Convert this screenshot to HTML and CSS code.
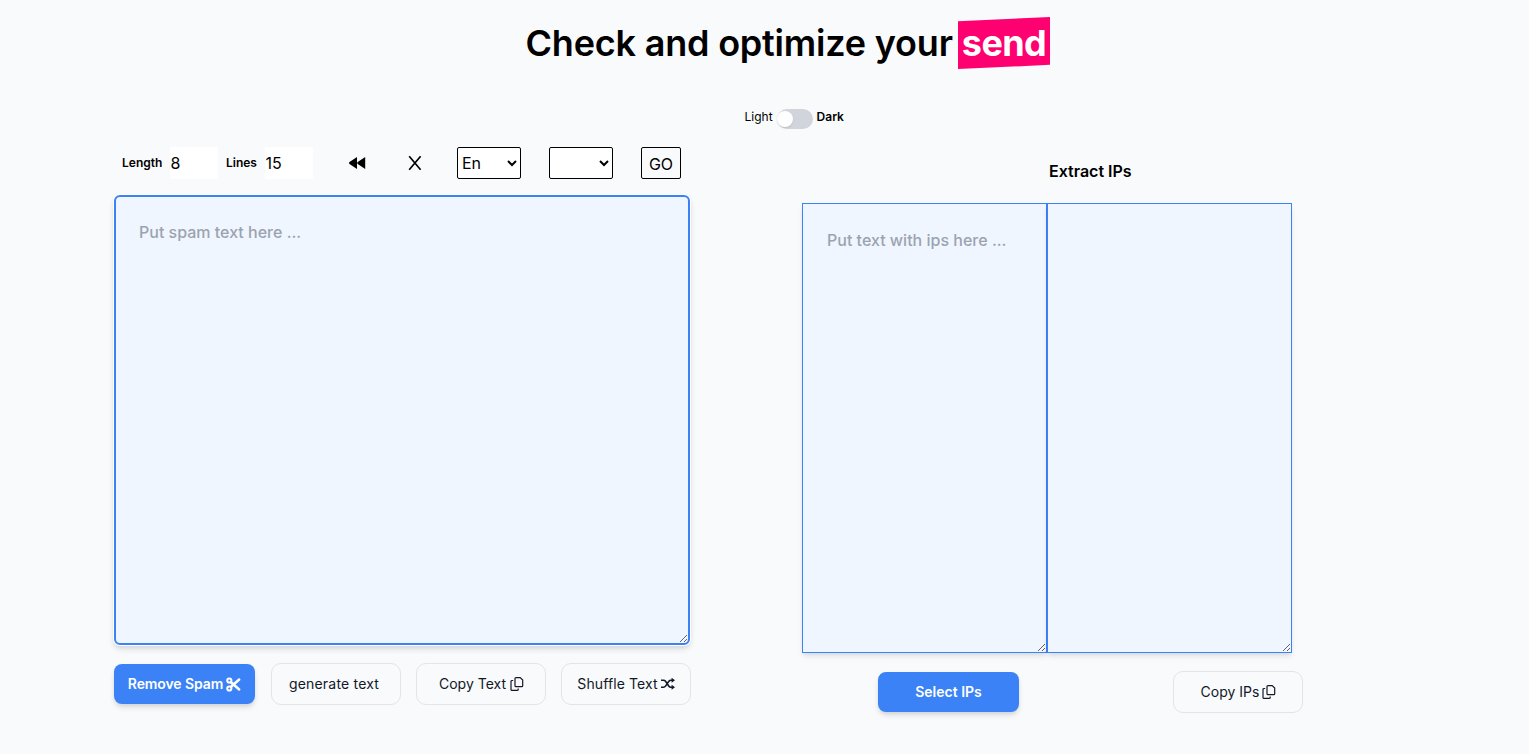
FILE: index.html
```html
<!DOCTYPE html>
<html lang="en">
<head>
<meta charset="utf-8">
<title>Check and optimize your send</title>
<link rel="stylesheet" href="styles.css">
</head>
<body>
<svg width="0" height="0" class="sprite">
  <symbol id="copy" viewBox="0 0 14 14"><path d="M6 .6h4.200l2.500 2.500v5.600a1 1 0 0 1-1 1H6a1 1 0 0 1-1-1V1.600a1 1 0 0 1 1-1zM3.200 3.500H2a1 1 0 0 0-1 1v7.900a1 1 0 0 0 1 1h5.200a1 1 0 0 0 1-1v-.8" fill="none" stroke="currentColor" stroke-width="1.200"/></symbol>
</svg>
<header class="header">
  <h1 class="title"><span class="lead">Check and optimize your</span><span class="mark">send</span></h1>
  <div class="theme"><span class="light">Light</span><span class="switch"><span class="knob"></span></span><span class="dark">Dark</span></div>
</header>
<main class="main">
  <section class="spam">
    <div class="toolbar">
      <label class="label" for="len">Length</label><input class="num" id="len" value="8">
      <label class="label lines" for="lines">Lines</label><input class="num" id="lines" value="15">
      <svg class="rewind" viewBox="0 0 18 14"><path d="M9 1v12L1.500 8Q.3 7 1.500 6zM17.200 1v12L9.700 8Q8.500 7 9.700 6z"/></svg>
      <svg class="close" viewBox="0 0 14 16"><path d="M1.200 1.200l11.400 13.600M12.600 1.200L1.200 14.800"/></svg>
      <select class="select"><option>En</option></select>
      <select class="select second"><option></option></select>
      <button class="go">GO</button>
    </div>
    <textarea class="area spam-area" placeholder="Put spam text here ..."></textarea>
    <div class="actions">
      <button class="btn primary">Remove Spam <svg class="cut" viewBox="0 0 15 15"><g fill="none" stroke="currentColor"><circle cx="3.300" cy="3.500" r="2.100" stroke-width="2"/><circle cx="3.300" cy="11.500" r="2.100" stroke-width="2"/><path d="M5 5.200l8.200 7.300M5 9.800l8.200-7.300" stroke-width="2.500" stroke-linecap="round"/></g></svg></button>
      <button class="btn generate">generate text</button>
      <button class="btn with-copy">Copy Text <svg class="icon"><use href="#copy"/></svg></button>
      <button class="btn shuffle">Shuffle Text <svg class="icon" viewBox="0 0 14 14"><path d="M0 3.200h2.500c1 0 1.500.4 2 1.100l3.400 4.900c.5.700 1 1 2 1h1.500M0 10.200h2.500c1 0 1.500-.4 2-1.100l3.400-4.800c.5-.7 1-1.100 2-1.100h1.500" fill="none" stroke="currentColor" stroke-width="1.600"/><path d="M10.600.7L14 3.200l-3.400 2.600zM10.600 7.700l3.400 2.500-3.400 2.600z" fill="currentColor"/></svg></button>
    </div>
  </section>
  <section class="ips">
    <h2 class="subtitle">Extract IPs</h2>
    <div class="pair"><textarea class="area ip-area" placeholder="Put text with ips here ..."></textarea><textarea class="area ip-area"></textarea></div>
    <div class="actions ip-actions">
      <button class="btn primary select-ips">Select IPs</button>
      <button class="btn copy-ips">Copy IPs <svg class="icon"><use href="#copy"/></svg></button>
    </div>
  </section>
</main>
</body>
</html>
```
FILE: styles.css
```css
* { box-sizing: border-box; }
body { margin: 0; height: 754px; overflow: hidden; background: #f9fafc; color: #000; font: 16px/24px Inter, sans-serif; }
button, input, select, textarea { font: inherit; color: inherit; margin: 0; }
.sprite { position: absolute; }
.header { height: 147px; padding: 17px 0 0 525.5px; }
.title { display: flex; margin: 0; height: 52px; font-size: 36px; font-weight: 600; line-height: 52px; white-space: nowrap; }
.lead { width: 432.5px; letter-spacing: -.2px; }
.mark { width: 92px; clip-path: polygon(0 8%, 100% 0, 100% 92%, 0 100%); background: #ff0070; color: #fff; font-weight: 700; letter-spacing: -.6px; text-align: center; }
.theme { display: flex; margin: 38px 0 0 219px; font-size: 12px; line-height: 20px; }
.switch { width: 36px; height: 20px; margin: 2px 4px 0 4px; padding: 2px 0; border-radius: 10px; background: #d1d5db; }
.knob { display: block; width: 16px; height: 16px; border-radius: 50%; background: #fff; box-shadow: 0 1px 2px rgba(0,0,0,.1); }
.dark { font-weight: 600; }
.main { display: flex; align-items: flex-start; padding-left: 114px; }
.spam { width: 577px; }
.toolbar { display: flex; align-items: center; height: 32px; padding-left: 8px; }
.label { width: 48px; font-size: 12px; font-weight: 600; }
.lines { width: 39px; margin-left: 8px; }
.num { width: 48px; height: 32px; padding: 0 0 0 .5px; border: 0; background: #fff; }
.rewind { width: 18px; height: 14px; margin-left: 35px; }
.close { width: 14px; height: 16px; margin-left: 42px; fill: none; stroke: #000; stroke-width: 1.7; }
.select { width: 64px; height: 32px; margin-left: 35px; padding: 0; border: 1px solid #000; border-radius: 2px; background: #fff; }
.second { margin-left: 28px; }
.go { width: 40px; height: 32px; margin-left: 28px; padding: 2px 0 0; border: 1px solid #000; border-radius: 2px; background: transparent; }
.area { display: block; height: 450px; border: 1px solid #3b82f6; background: #eff6ff; padding: 24px; font-weight: 500; outline: 0; box-shadow: 0 4px 6px -1px rgba(0,0,0,.1), 0 2px 4px -1px rgba(0,0,0,.06); }
.area::placeholder { color: #9ca3af; }
.spam-area { width: 576px; margin-top: 16px; padding: 23px; border-width: 2px; border-radius: 6px; box-shadow: 0 0 0 1px #fff, 0 4px 6px 0 rgba(0,0,0,.12), 0 2px 4px rgba(0,0,0,.05); }
.actions { display: flex; align-items: center; gap: 15px; margin-top: 18px; }
.btn { display: flex; align-items: center; justify-content: center; gap: 3px; width: 130px; height: 42px; padding: 0; border: 1px solid #e2e4e8; border-radius: 10px; background: #f9fafc; color: #111827; font-size: 14px; white-space: nowrap; }
.generate { padding-right: 4px; letter-spacing: .2px; }
.with-copy { gap: 4px; padding-left: 1px; }
.copy-ips { padding-left: 1px; }
.shuffle { letter-spacing: .1px; }
.primary { width: 141px; height: 40px; margin-right: 1px; border: 0; border-radius: 8px; background: #3b82f6; color: #fff; font-weight: 600; letter-spacing: -.1px; box-shadow: 0 4px 6px -1px rgba(0,0,0,.12), 0 2px 4px -1px rgba(0,0,0,.08); }
.select-ips { letter-spacing: 0; }
.icon { width: 14px; height: 14px; }
.cut { width: 15px; height: 15px; }
.ips { width: 501px; margin-left: 111px; padding-top: 12px; }
.subtitle { margin: 0 0 20px 247px; font-size: 16px; line-height: 24px; font-weight: 600; }
.pair { display: flex; }
.ip-area { width: 245px; border-radius: 0; }
.ip-actions { justify-content: space-between; padding-left: 76px; }
```
